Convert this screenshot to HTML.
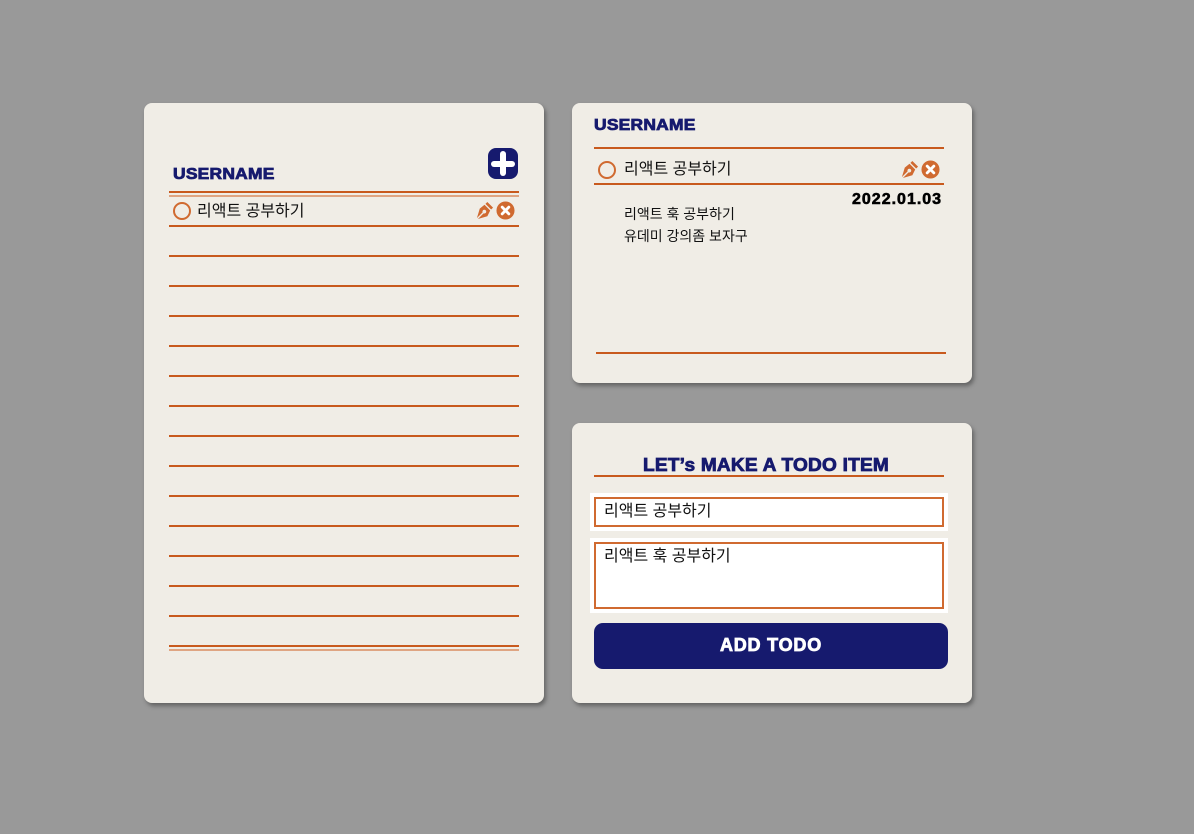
<!DOCTYPE html>
<html><head><meta charset="utf-8"><style>
*{margin:0;padding:0;box-sizing:border-box}
body{width:1194px;height:834px;background:#999999;position:relative;overflow:hidden;font-family:"Liberation Sans","Noto Sans CJK KR",sans-serif}
.card{position:absolute;background:#f0ede6;border-radius:8px;box-shadow:2px 3px 4px rgba(0,0,0,.35)}
.a{position:absolute}
.ln{position:absolute;height:2px;background:#c85a1e}
.lt{position:absolute;height:2px;background:#dfa582}
.hd{position:absolute;font-weight:900;color:#161a6e;font-size:16px;letter-spacing:0.2px;transform-origin:left top;-webkit-text-stroke:0.8px #161a6e}
.ko{position:absolute;font-size:16px;color:#111;line-height:20px}
.ring{position:absolute;width:18px;height:18px;border:2px solid #d06a30;border-radius:50%}
.sm{position:absolute;font-size:14px;color:#111;line-height:18px}
</style></head><body>
<svg width="0" height="0" style="position:absolute"><defs>
<symbol id="pen" viewBox="0 0 20 20"><path d="M13 1l6 6-2 2-6-6z M10 4l6 6-3 6-10 3 1-1 5-5a2 2 0 1 0-1-1l-5 5-1 1 3-10z" fill="#d06a30"/></symbol>
<symbol id="x" viewBox="0 0 20 20"><circle cx="10" cy="10" r="9.5" fill="#d06a30"/><path d="M6.5 6.5l7 7M13.5 6.5l-7 7" stroke="#fff" stroke-width="3" stroke-linecap="round"/></symbol>
</defs></svg>

<div class="card" style="left:144px;top:103px;width:400px;height:600px"></div>
<div class="hd" style="left:173px;top:166px;transform:scaleX(1.09)">USERNAME</div>
<div class="a" style="left:488px;top:148px;width:30px;height:31px;background:#161a6e;border-radius:8px"></div>
<div class="a" style="left:491px;top:161px;width:24px;height:6px;background:#fff;border-radius:3px"></div>
<div class="a" style="left:500px;top:151px;width:6px;height:25px;background:#fff;border-radius:3px"></div>
<div class="ln" style="left:169px;top:191px;width:350px"></div>
<div class="lt" style="left:169px;top:195px;width:350px"></div>
<div class="ring" style="left:173px;top:202px"></div>
<div class="ko" style="left:197px;top:202px">리액트 공부하기</div>
<svg class="a" style="left:475px;top:201px" width="19" height="19"><use href="#pen"/></svg>
<svg class="a" style="left:496px;top:201px" width="19" height="19"><use href="#x"/></svg>
<div class="ln" style="left:169px;top:225px;width:350px"></div>
<div class="ln" style="left:169px;top:255px;width:350px"></div>
<div class="ln" style="left:169px;top:285px;width:350px"></div>
<div class="ln" style="left:169px;top:315px;width:350px"></div>
<div class="ln" style="left:169px;top:345px;width:350px"></div>
<div class="ln" style="left:169px;top:375px;width:350px"></div>
<div class="ln" style="left:169px;top:405px;width:350px"></div>
<div class="ln" style="left:169px;top:435px;width:350px"></div>
<div class="ln" style="left:169px;top:465px;width:350px"></div>
<div class="ln" style="left:169px;top:495px;width:350px"></div>
<div class="ln" style="left:169px;top:525px;width:350px"></div>
<div class="ln" style="left:169px;top:555px;width:350px"></div>
<div class="ln" style="left:169px;top:585px;width:350px"></div>
<div class="ln" style="left:169px;top:615px;width:350px"></div>
<div class="ln" style="left:169px;top:645px;width:350px"></div>
<div class="lt" style="left:169px;top:649px;width:350px"></div>

<div class="card" style="left:572px;top:103px;width:400px;height:280px"></div>
<div class="hd" style="left:594px;top:117px;transform:scaleX(1.09)">USERNAME</div>
<div class="ln" style="left:594px;top:147px;width:350px"></div>
<div class="ring" style="left:598px;top:161px"></div>
<div class="ko" style="left:624px;top:160px">리액트 공부하기</div>
<svg class="a" style="left:900px;top:160px" width="19" height="19"><use href="#pen"/></svg>
<svg class="a" style="left:921px;top:160px" width="19" height="19"><use href="#x"/></svg>
<div class="ln" style="left:594px;top:183px;width:350px"></div>
<div class="a" style="left:852px;top:191px;font-weight:900;font-size:16px;color:#000;letter-spacing:1px;-webkit-text-stroke:0.6px #000">2022.01.03</div>
<div class="sm" style="left:624px;top:205px">리액트 훅 공부하기</div>
<div class="sm" style="left:624px;top:227px">유데미 강의좀 보자구</div>
<div class="ln" style="left:596px;top:352px;width:350px"></div>

<div class="card" style="left:572px;top:423px;width:400px;height:280px"></div>
<div class="hd" style="left:643px;top:455px;font-size:18px;transform:scaleX(1.06)">LET’s MAKE A TODO ITEM</div>
<div class="ln" style="left:594px;top:475px;width:350px"></div>
<div class="a" style="left:590px;top:493px;width:358px;height:38px;background:#fff"></div>
<div class="a" style="left:594px;top:497px;width:350px;height:30px;border:2px solid #d06a30"></div>
<div class="ko" style="left:604px;top:502px">리액트 공부하기</div>
<div class="a" style="left:590px;top:538px;width:358px;height:75px;background:#fff"></div>
<div class="a" style="left:594px;top:542px;width:350px;height:67px;border:2px solid #d06a30"></div>
<div class="ko" style="left:604px;top:547px">리액트 훅 공부하기</div>
<div class="a" style="left:594px;top:623px;width:354px;height:46px;background:#161a6e;border-radius:9px"></div>
<div class="a" style="left:594px;top:635px;width:354px;text-align:center;font-weight:900;color:#fff;font-size:18px;letter-spacing:0.8px;-webkit-text-stroke:0.8px #fff">ADD TODO</div>
</body></html>
